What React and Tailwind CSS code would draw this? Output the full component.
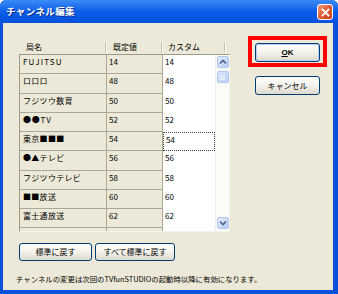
const rows = [
  ["FUJITSU", "14"],
  ["ロロロ", "48"],
  ["フジツウ数育", "50"],
  ["●●TV", "52"],
  ["東京■■■", "54"],
  ["●▲テレビ", "56"],
  ["フジツウテレビ", "58"],
  ["■■放送", "60"],
  ["富士通放送", "62"],
];

function Chevron({ up }) {
  return (
    <svg width="8" height="6" viewBox="0 0 8 6">
      <path
        d={up ? "M1 4.5 L4 1.5 L7 4.5" : "M1 1.5 L4 4.5 L7 1.5"}
        fill="none"
        stroke="#4D6185"
        strokeWidth="1.6"
      />
    </svg>
  );
}

function XPButton({ children, className = "", def = false }) {
  return (
    <div
      className={
        "flex items-center justify-center rounded-[3px] border border-[#003C74] bg-linear-to-b from-[#FFFFFF] via-[#F3F2EC] to-[#DDD9CD] text-[8px] leading-none text-black " +
        (def ? "shadow-[inset_0_0_0_1px_#B9D0F8] " : "") +
        className
      }
    >
      {children}
    </div>
  );
}

export default function App() {
  return (
    <div className="w-[338px] h-[294px] flex flex-col bg-[#0B4FDB] rounded-t-[6px] overflow-hidden font-['Noto_Sans_CJK_JP','Liberation_Sans',sans-serif]">
      {/* Title bar */}
      <div className="h-[23px] shrink-0 flex items-center justify-between pl-[6px] pr-[5px] bg-linear-to-b from-[#3B8CF7] via-[#0B5DE8] to-[#0451DC]">
        <span className="text-white font-bold text-[9.5px] leading-none tracking-[0.4px] [text-shadow:1px_1px_0_#0A2A8C]">
          チャンネル編集
        </span>
        <div className="w-[16px] h-[16px] mt-[1px] rounded-[3px] border border-white bg-linear-to-br from-[#F09A7A] via-[#E25A32] to-[#C5401D] flex items-center justify-center">
          <svg width="9" height="9" viewBox="0 0 9 9">
            <path d="M1.5 1.5 L7.5 7.5 M7.5 1.5 L1.5 7.5" stroke="white" strokeWidth="1.8" strokeLinecap="square" />
          </svg>
        </div>
      </div>

      {/* Content */}
      <div className="flex-1 ml-[3px] mr-[5px] mb-[4px] bg-[#ECE9D8] flex flex-col">
        <div className="flex pt-[16px]">
          {/* Left: table */}
          <div className="ml-[16px] w-[211px] flex flex-col">
            {/* Header */}
            <div className="h-[15px] flex text-[8px] leading-none text-black">
              <div className="w-[88px] pl-[7px] pt-[4px] relative">
                局名
                <div className="absolute right-0 top-[3px] bottom-[1px] w-[2px] border-l border-[#C9C6B5] border-r border-r-white" />
              </div>
              <div className="w-[56px] pl-[6px] pt-[4px] relative">
                既定値
                <div className="absolute right-0 top-[3px] bottom-[1px] w-[2px] border-l border-[#C9C6B5] border-r border-r-white" />
              </div>
              <div className="w-[63px] pl-[5px] pt-[4px] relative">
                カスタム
                <div className="absolute right-0 top-[3px] bottom-[1px] w-[2px] border-l border-[#C9C6B5] border-r border-r-white" />
              </div>
            </div>

            {/* Body */}
            <div className="h-[178px] border border-[#9D9A8B] border-r-[#F4F3EE] border-b-[#F4F3EE] flex overflow-hidden">
              <div className="w-[195px] flex flex-col bg-white">
                {rows.map(([name, val], i) => (
                  <div key={i} className="h-[19.25px] shrink-0 flex text-[8px] leading-[10px] text-black">
                    <div
                      className={
                        "w-[87px] bg-[#ECE9D8] border-b border-r border-[#ACA899] pl-[3px] pt-[2px] " +
                        (i === 0 ? "tracking-[1.2px]" : i === 3 ? "tracking-[0.8px]" : "tracking-[0.3px]")
                      }
                    >
                      {name}
                    </div>
                    <div className="w-[56px] bg-[#ECE9D8] border-b border-r border-[#ACA899] pl-[2px] pt-[2px]">
                      {val}
                    </div>
                    <div
                      className={
                        "w-[52px] bg-white pl-[2px] pt-[2px] " +
                        (i === 4 ? "border border-dotted border-[#444] pl-[1px] pt-[1px]" : "")
                      }
                    >
                      {val}
                    </div>
                  </div>
                ))}
                <div className="flex-1 flex">
                  <div className="w-[87px] bg-[#ECE9D8] border-r border-[#ACA899]" />
                  <div className="w-[56px] bg-[#ECE9D8] border-r border-[#ACA899]" />
                  <div className="w-[52px] bg-white" />
                </div>
              </div>
              {/* Scrollbar */}
              <div className="w-[14px] bg-[#FBFBF7] border-l border-[#EEEDE6] flex flex-col items-center">
                <div className="mt-[1px] w-[12px] h-[12px] rounded-[2px] border border-[#B3C6F2] bg-linear-to-br from-[#E2EBFE] to-[#B9CDF8] flex items-center justify-center">
                  <Chevron up />
                </div>
                <div className="mt-[3px] w-[12px] h-[12px] rounded-[2px] border border-[#B3C6F2] bg-linear-to-br from-[#D9E5FD] to-[#BCCFF8] flex flex-col items-center justify-center gap-[1px]">
                  <div className="w-[5px] h-px bg-[#EEF3FF]" />
                  <div className="w-[5px] h-px bg-[#EEF3FF]" />
                  <div className="w-[5px] h-px bg-[#EEF3FF]" />
                </div>
                <div className="flex-1" />
                <div className="mb-[2px] w-[12px] h-[12px] rounded-[2px] border border-[#B3C6F2] bg-linear-to-br from-[#E2EBFE] to-[#B9CDF8] flex items-center justify-center">
                  <Chevron />
                </div>
              </div>
            </div>

            {/* Bottom buttons */}
            <div className="mt-[11px] flex gap-[3px]">
              <XPButton className="w-[73px] h-[18px]">標準に戻す</XPButton>
              <XPButton className="w-[80px] h-[18px]">すべて標準に戻す</XPButton>
            </div>
          </div>

          {/* Right: OK / Cancel */}
          <div className="ml-[25px] mt-[4px] flex flex-col gap-[14px]">
            <div className="relative">
              <XPButton def className="w-[65px] h-[19px] font-['Liberation_Sans',sans-serif] text-[7px] font-bold">
                <span className="underline">O</span>K
              </XPButton>
              <div className="absolute -left-[7px] -right-[7px] -top-[7px] -bottom-[5px] border-[4px] border-[#FF0000]" />
            </div>
            <XPButton className="w-[65px] h-[19px]">キャンセル</XPButton>
          </div>
        </div>

        {/* Note */}
        <div className="mt-[13px] pl-[13px] text-[7.4px] leading-[10px] text-black whitespace-nowrap">
          チャンネルの変更は次回のTVfunSTUDIOの起動時以降に有効になります。
        </div>
      </div>
    </div>
  );
}
